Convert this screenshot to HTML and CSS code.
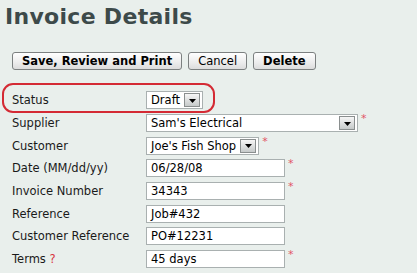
FILE: index.html
```html
<!DOCTYPE html>
<html>
<head>
<meta charset="utf-8">
<link rel="stylesheet" href="styles.css">
</head>
<body>
<h1 class="title">Invoice Details</h1>
<div class="actions">
  <button class="btn btn-bold">Save, Review and Print</button>
  <button class="btn">Cancel</button>
  <button class="btn btn-bold">Delete</button>
</div>
<div class="form">
  <div class="row row-highlight">
    <span class="label">Status</span>
    <div class="field">
      <span class="select"><span class="select-text">Draft</span><span class="drop"><svg width="7" height="4" viewBox="0 0 7 4"><path d="M0 0h7L3.5 4z" fill="#000"/></svg></span></span>
    </div>
  </div>
  <div class="row">
    <span class="label">Supplier</span>
    <div class="field">
      <span class="select select-wide"><span class="select-text">Sam's Electrical</span><span class="drop"><svg width="7" height="4" viewBox="0 0 7 4"><path d="M0 0h7L3.5 4z" fill="#000"/></svg></span></span><span class="req">*</span>
    </div>
  </div>
  <div class="row">
    <span class="label">Customer</span>
    <div class="field">
      <span class="select"><span class="select-text">Joe's Fish Shop</span><span class="drop"><svg width="7" height="4" viewBox="0 0 7 4"><path d="M0 0h7L3.5 4z" fill="#000"/></svg></span></span><span class="req">*</span>
    </div>
  </div>
  <div class="row">
    <span class="label">Date (MM/dd/yy)</span>
    <div class="field"><span class="input">06/28/08</span><span class="req">*</span></div>
  </div>
  <div class="row">
    <span class="label">Invoice Number</span>
    <div class="field"><span class="input">34343</span><span class="req">*</span></div>
  </div>
  <div class="row">
    <span class="label">Reference</span>
    <div class="field"><span class="input">Job#432</span></div>
  </div>
  <div class="row">
    <span class="label">Customer Reference</span>
    <div class="field"><span class="input">PO#12231</span></div>
  </div>
  <div class="row">
    <span class="label">Terms <span class="help">?</span></span>
    <div class="field"><span class="input">45 days</span><span class="req">*</span></div>
  </div>
</div>
</body>
</html>
```
FILE: styles.css
```css
html, body {
  margin: 0;
  padding: 0;
  background: #e9efec;
}
body {
  font-family: "DejaVu Sans", Verdana, sans-serif;
  font-size: 11.5px;
  color: #1a1a1a;
  width: 417px;
  height: 273px;
  overflow: hidden;
}
.title {
  margin: 0;
  padding: 5px 0 0 5px;
  font-size: 22px;
  font-weight: bold;
  color: #3d4a4a;
  line-height: 24px;
  letter-spacing: 0.3px;
}
.actions {
  display: flex;
  gap: 6px;
  padding: 23px 0 0 12px;
}
.btn {
  font-family: "DejaVu Sans", Verdana, sans-serif;
  font-size: 11.5px;
  color: #000;
  height: 18px;
  padding: 0 9px;
  border: 1px solid #7c8080;
  border-radius: 3px;
  background: linear-gradient(#ffffff, #ececec 60%, #dcdcdc);
  line-height: 16px;
}
.btn-bold {
  font-weight: bold;
}
.form {
  padding: 19px 0 0 12px;
  display: flex;
  flex-direction: column;
}
.row {
  display: flex;
  align-items: center;
  height: 22.7px;
  position: relative;
}
.row-highlight::before {
  content: "";
  position: absolute;
  left: -10px;
  top: -6px;
  width: 209px;
  height: 26px;
  border: 2px solid #d42a34;
  border-radius: 11px;
}
.label {
  width: 134px;
  flex: none;
}
.help {
  color: #d8343e;
}
.field {
  display: flex;
  align-items: flex-start;
}
.select, .input {
  display: flex;
  align-items: center;
  box-sizing: border-box;
  height: 18px;
  background: #fff;
  border: 1px solid #a9b0b0;
  font-size: 11.5px;
  color: #000;
}
.select-text {
  padding: 0 4px 0 4px;
  white-space: nowrap;
}
.select-wide {
  width: 212px;
  justify-content: space-between;
}
.drop {
  box-sizing: border-box;
  width: 16px;
  height: 14px;
  margin-right: 2px;
  border: 1px solid #8a8f8f;
  background: linear-gradient(#f6f6f6, #c6caca);
  display: flex;
  align-items: center;
  justify-content: center;
}
.drop svg {
  display: block;
  margin-top: 1px;
}
.input {
  width: 139px;
  padding-left: 4px;
}
.req {
  color: #e25466;
  font-size: 11px;
  line-height: 10px;
  margin-left: 3px;
}
```
